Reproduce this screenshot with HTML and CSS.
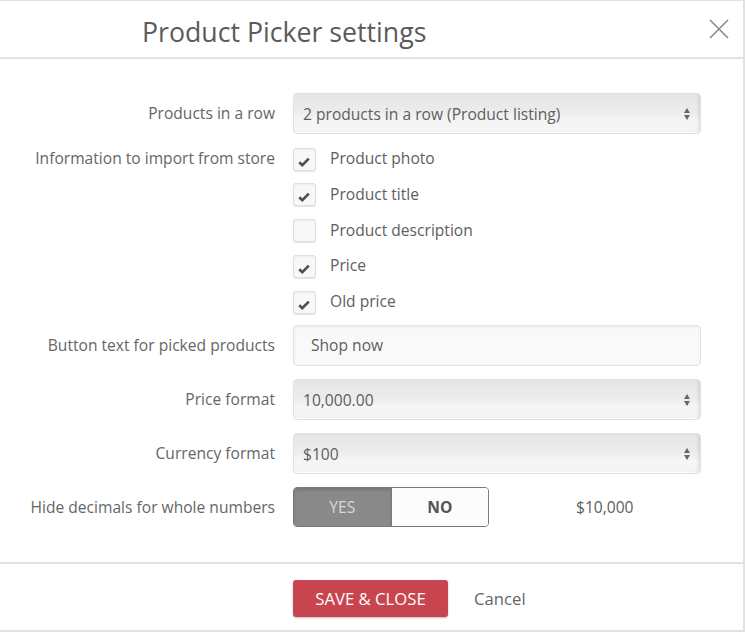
FILE: index.html
```
<!DOCTYPE html>
<html>
<head>
<meta charset="utf-8">
<link rel="stylesheet" href="styles.css">
</head>
<body>
<div class="dialog">
  <div class="header">
    <h1 class="title">Product Picker settings</h1>
    <span class="close">
      <svg width="20" height="20" viewBox="0 0 20 20"><path d="M1 1 L19 19 M19 1 L1 19" stroke="#8a8a8a" stroke-width="1.6" fill="none"/></svg>
    </span>
  </div>
  <div class="body">
    <div class="label lh41">Products in a row</div>
    <div class="select"><span>2 products in a row (Product listing)</span><span class="arrows"><i class="up"></i><i class="down"></i></span></div>

    <div class="label lh22">Information to import from store</div>
    <div class="checks">
      <div class="check"><span class="box on"><svg width="12" height="10" viewBox="0 0 12 10"><path d="M1.2 5.2 L4.3 8.2 L10.8 1.6" stroke="#4f4f4f" stroke-width="2.6" fill="none"/></svg></span>Product photo</div>
      <div class="check"><span class="box on"><svg width="12" height="10" viewBox="0 0 12 10"><path d="M1.2 5.2 L4.3 8.2 L10.8 1.6" stroke="#4f4f4f" stroke-width="2.6" fill="none"/></svg></span>Product title</div>
      <div class="check"><span class="box"></span>Product description</div>
      <div class="check"><span class="box on"><svg width="12" height="10" viewBox="0 0 12 10"><path d="M1.2 5.2 L4.3 8.2 L10.8 1.6" stroke="#4f4f4f" stroke-width="2.6" fill="none"/></svg></span>Price</div>
      <div class="check"><span class="box on"><svg width="12" height="10" viewBox="0 0 12 10"><path d="M1.2 5.2 L4.3 8.2 L10.8 1.6" stroke="#4f4f4f" stroke-width="2.6" fill="none"/></svg></span>Old price</div>
    </div>

    <div class="label lh41">Button text for picked products</div>
    <div class="input">Shop now</div>

    <div class="label lh41">Price format</div>
    <div class="select"><span>10,000.00</span><span class="arrows"><i class="up"></i><i class="down"></i></span></div>

    <div class="label lh41">Currency format</div>
    <div class="select"><span>$100</span><span class="arrows"><i class="up"></i><i class="down"></i></span></div>

    <div class="label lh40">Hide decimals for whole numbers</div>
    <div class="toggle-row">
      <div class="toggle"><span class="opt yes">YES</span><span class="opt no">NO</span></div>
      <span class="preview">$10,000</span>
    </div>
  </div>
  <div class="footer">
    <span class="btn">SAVE &amp; CLOSE</span>
    <span class="cancel">Cancel</span>
  </div>
</div>
</body>
</html>
```
FILE: styles.css
```
html, body { margin: 0; padding: 0; background: #fff; }
body { font-family: "Open Sans", "Liberation Sans", sans-serif; color: #666; }
.dialog {
  width: 743px;
  border-top: 1px solid #e2e2e2;
  border-right: 2px solid #e2e2e2;
  border-bottom: 2px solid #e2e2e2;
}
.header {
  height: 56px;
  border-bottom: 2px solid #e2e2e2;
  display: flex;
  align-items: center;
  justify-content: space-between;
  padding-left: 142px;
  padding-right: 14px;
}
.title {
  margin: 0;
  font-weight: 400;
  font-size: 26.7px;
  color: #5b5b5b;
  padding-top: 5px;
}
.close { display: flex; }
.body {
  display: grid;
  grid-template-columns: 275px 408px;
  column-gap: 18px;
  row-gap: 13px;
  padding: 34px 0 35px 0;
}
.label {
  text-align: right;
  font-size: 15.6px;
  color: #666;
  white-space: nowrap;
}
.lh41 { line-height: 41px; }
.lh40 { line-height: 40px; }
.lh22 { line-height: 22px; }
.select {
  height: 41px;
  box-sizing: border-box;
  border: 1px solid #e0e0e0;
  border-radius: 4px;
  background: linear-gradient(#e5e5e5 0%, #ececec 45%, #f6f6f6 70%, #f3f3f3 100%);
  box-shadow: inset -3px 0 3px -1px rgba(0,0,0,0.08), inset 0 -1px 0 #fff;
  display: flex;
  align-items: center;
  justify-content: space-between;
  padding: 0 10px 0 9px;
  font-size: 15.6px;
  color: #5e5e5e;
}
.arrows { display: flex; flex-direction: column; gap: 2px; align-items: center; }
.arrows i { display: block; width: 0; height: 0; border-left: 3.5px solid transparent; border-right: 3.5px solid transparent; }
.arrows .up { border-bottom: 5px solid #666; }
.arrows .down { border-top: 5px solid #666; }
.checks { display: flex; flex-direction: column; gap: 13.75px; }
.check {
  display: flex;
  align-items: center;
  height: 22px;
  font-size: 15.6px;
  color: #5e5e5e;
  line-height: 20px;
}
.box {
  width: 23px;
  height: 23px;
  box-sizing: border-box;
  border: 1px solid #dedede;
  border-radius: 3px;
  background: #f8f8f8;
  box-shadow: 0 1px 1px rgba(0,0,0,0.1), inset 0 1px 2px rgba(0,0,0,0.05);
  margin-right: 14px;
  display: flex;
  align-items: center;
  justify-content: center;
  padding-top: 5px;
  padding-right: 1px;
  margin-top: 2px;
}
.input {
  height: 41px;
  box-sizing: border-box;
  border: 1px solid #e2e2e2;
  border-radius: 4px;
  background: #f9f9f9;
  box-shadow: inset 0 1px 3px rgba(0,0,0,0.07);
  padding-left: 17px;
  line-height: 39px;
  font-size: 15.6px;
  color: #5e5e5e;
}
.toggle-row { display: flex; align-items: center; }
.toggle {
  width: 196px;
  height: 40px;
  box-sizing: border-box;
  border: 1px solid #7a7a7a;
  border-radius: 4px;
  overflow: hidden;
  display: flex;
}
.opt {
  flex: 1;
  display: flex;
  align-items: center;
  justify-content: center;
  font-size: 15.6px;
}
.yes {
  background: #8a8a8a;
  color: #d8d8d8;
  box-shadow: inset 0 2px 3px rgba(0,0,0,0.15);
  border-right: 1px solid #7a7a7a;
}
.no { background: #fcfcfc; color: #555; font-weight: 700; }
.preview { margin-left: 87px; font-size: 15.6px; color: #5e5e5e; }
.footer {
  height: 66px;
  border-top: 2px solid #e2e2e2;
  display: flex;
  align-items: center;
  padding-left: 293px;
  gap: 26px;
}
.btn {
  width: 155px;
  height: 37px;
  background: #c8454f;
  color: #fff;
  border-radius: 3px;
  box-shadow: 0 1px 2px rgba(0,0,0,0.25);
  display: flex;
  align-items: center;
  justify-content: center;
  font-size: 16.7px;
  margin-top: 3px;
}
.cancel { font-size: 16.7px; color: #666; margin-top: 3px; }
```
